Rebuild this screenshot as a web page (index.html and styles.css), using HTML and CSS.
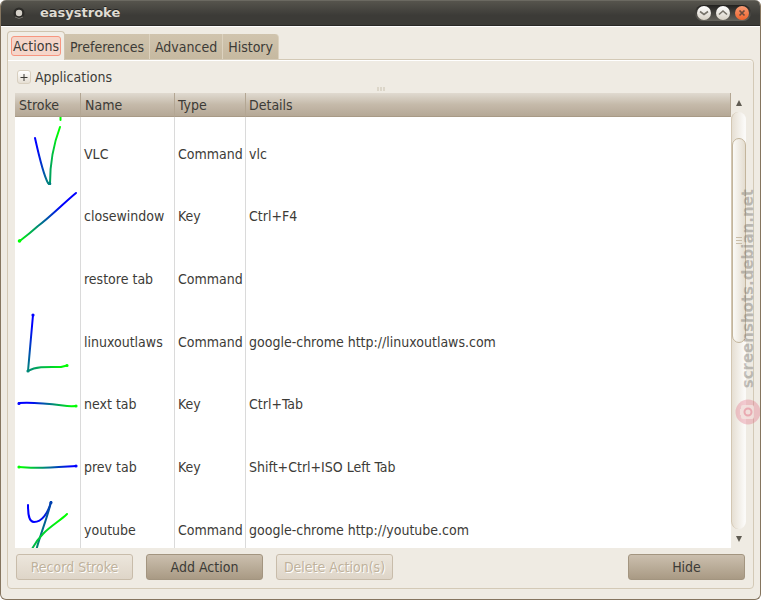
FILE: index.html
```
<!DOCTYPE html>
<html lang="en">
<head>
  <meta charset="UTF-8">
  <meta name="viewport" content="width=device-width, initial-scale=1.0">
  <title>easystroke</title>
  <link rel="stylesheet" href="styles.css">
</head>
<body>
  <div class="window">
    <header class="titlebar">
      <svg class="titlebar-menu" width="12" height="12" viewBox="0 0 12 12">
        <circle cx="6" cy="6" r="5.5" fill="#2c2b28"/>
        <path d="M2 10Q6 13 10 10" fill="none" stroke="#77756e"/>
        <circle cx="6" cy="6" r="3.2" fill="#d5d1c9"/>
      </svg>
      <h1 class="titlebar-title">easystroke</h1>
      <div class="titlebar-buttons">
        <button class="win-btn" type="button" aria-label="Minimize">
          <svg width="14" height="14" viewBox="0 0 14 14"><path d="M3 5.500L7 8.500L11 5.500" fill="none" stroke="#77736a" stroke-width="1.6"/></svg>
        </button>
        <button class="win-btn" type="button" aria-label="Maximize">
          <svg width="14" height="14" viewBox="0 0 14 14"><path d="M3 8.500L7 5L11 8.500" fill="none" stroke="#77736a" stroke-width="1.6"/></svg>
        </button>
        <button class="win-btn win-btn-close" type="button" aria-label="Close">
          <svg width="14" height="14" viewBox="0 0 14 14"><path d="M4.500 4.500L9.500 9.500M9.500 4.500L4.500 9.500" fill="none" stroke="#6b4a3c" stroke-width="1.7"/></svg>
        </button>
      </div>
    </header>

    <main class="content">
      <div class="tabs" role="tablist">
        <button class="tab tab-active" type="button" role="tab" aria-selected="true"><span class="tab-focus">Actions</span></button>
        <button class="tab" type="button" role="tab" aria-selected="false">Preferences</button>
        <button class="tab" type="button" role="tab" aria-selected="false">Advanced</button>
        <button class="tab" type="button" role="tab" aria-selected="false">History</button>
      </div>

      <section class="panel" role="tabpanel">
        <div class="expander">
          <button class="expander-btn" type="button" id="expander" aria-labelledby="expander-label">
            <svg width="8" height="8" viewBox="0 0 8 8"><path d="M4 1V8M0.500 4.500H7.500" stroke="#3c3b37" stroke-width="1"/></svg>
          </button>
          <label id="expander-label" for="expander">Applications</label>
        </div>
        <div class="grip"><i></i><i></i><i></i></div>

        <div class="list">
          <div class="list-view">
            <table class="actions">
              <thead>
                <tr>
                  <th class="col-stroke" scope="col">Stroke</th>
                  <th class="col-name" scope="col">Name</th>
                  <th class="col-type" scope="col">Type</th>
                  <th scope="col">Details</th>
                </tr>
              </thead>
              <tbody>
                <!-- tail of the row scrolled out above -->
                <tr class="row-cut">
                  <td><svg class="stroke" width="65" height="5" viewBox="0 0 65 5"><path d="M45.500 -4V3" stroke="#00ff00"/></svg></td>
                  <td></td>
                  <td></td>
                  <td></td>
                </tr>
                <tr>
                  <td>
                    <svg class="stroke" width="65" height="62" viewBox="0 0 65 62">
                      <linearGradient id="g-vlc" gradientUnits="userSpaceOnUse" x1="22" y1="0" x2="43" y2="0"><stop offset="0" stop-color="#0000ff"/><stop offset="1" stop-color="#00ff00"/></linearGradient>
                      <path d="M20 15C24 33 28 51 33 60L35 60.500C35 42 39 20 45 4" stroke="url(#g-vlc)"/>
                      <circle cx="34.5" cy="60.5" r="0.800" stroke="#007f80"/>
                    </svg>
                  </td>
                  <td>VLC</td>
                  <td>Command</td>
                  <td>vlc</td>
                </tr>
                <tr>
                  <td>
                    <svg class="stroke" width="65" height="62" viewBox="0 0 65 62">
                      <linearGradient id="g-close" gradientUnits="userSpaceOnUse" x1="61" y1="0" x2="3" y2="0"><stop offset="0" stop-color="#0000ff"/><stop offset="0.250" stop-color="#0000ff"/><stop offset="1" stop-color="#00ff00"/></linearGradient>
                      <path d="M61 8C50 17 34 33 23 41Q14 49 6 55L4 56" stroke="url(#g-close)"/>
                      <circle cx="4.500" cy="56" r="0.800" stroke="#00ff00"/>
                    </svg>
                  </td>
                  <td>closewindow</td>
                  <td>Key</td>
                  <td>Ctrl+F4</td>
                </tr>
                <tr>
                  <td></td>
                  <td>restore tab</td>
                  <td>Command</td>
                  <td></td>
                </tr>
                <tr>
                  <td>
                    <svg class="stroke" width="65" height="62" viewBox="0 0 65 62">
                      <linearGradient id="g-linux-a" gradientUnits="userSpaceOnUse" x1="0" y1="15" x2="0" y2="60"><stop offset="0" stop-color="#0000ff"/><stop offset="1" stop-color="#008878"/></linearGradient>
                      <linearGradient id="g-linux-b" gradientUnits="userSpaceOnUse" x1="13" y1="0" x2="50" y2="0"><stop offset="0" stop-color="#008878"/><stop offset="1" stop-color="#00ff00"/></linearGradient>
                      <path d="M18 4L13 60" stroke="url(#g-linux-a)"/>
                      <path d="M13 60C22 55 34 56 46 56L52 54.500" stroke="url(#g-linux-b)"/>
                      <circle cx="18" cy="4" r="0.600" stroke="#0000ff"/>
                      <circle cx="13" cy="60" r="0.600" stroke="#008878"/>
                      <circle cx="52" cy="54.500" r="0.600" stroke="#00ff00"/>
                    </svg>
                  </td>
                  <td>linuxoutlaws</td>
                  <td>Command</td>
                  <td>google-chrome http://linuxoutlaws.com</td>
                </tr>
                <tr>
                  <td>
                    <svg class="stroke" width="65" height="62" viewBox="0 0 65 62">
                      <linearGradient id="g-next" gradientUnits="userSpaceOnUse" x1="15" y1="0" x2="58" y2="0"><stop offset="0" stop-color="#0000ff"/><stop offset="1" stop-color="#00ff00"/></linearGradient>
                      <path d="M4 30C20 29 36 31 48 32.500Q54 33.500 61 33" stroke="url(#g-next)"/>
                      <circle cx="4" cy="30.500" r="0.600" stroke="#0000ff"/>
                      <circle cx="61" cy="33" r="0.600" stroke="#00ff00"/>
                    </svg>
                  </td>
                  <td>next tab</td>
                  <td>Key</td>
                  <td>Ctrl+Tab</td>
                </tr>
                <tr>
                  <td>
                    <svg class="stroke" width="65" height="62" viewBox="0 0 65 62">
                      <linearGradient id="g-prev" gradientUnits="userSpaceOnUse" x1="56" y1="0" x2="6" y2="0"><stop offset="0" stop-color="#0000ff"/><stop offset="1" stop-color="#00ff00"/></linearGradient>
                      <path d="M61 30C44 31 22 33 4 31" stroke="url(#g-prev)"/>
                      <circle cx="4" cy="31" r="0.600" stroke="#00ff00"/>
                      <circle cx="61" cy="30" r="0.600" stroke="#0000ff"/>
                    </svg>
                  </td>
                  <td>prev tab</td>
                  <td>Key</td>
                  <td>Shift+Ctrl+ISO Left Tab</td>
                </tr>
                <tr>
                  <td>
                    <svg class="stroke" width="65" height="62" viewBox="0 0 65 62">
                      <linearGradient id="g-you-a" gradientUnits="userSpaceOnUse" x1="24" y1="0" x2="36" y2="0"><stop offset="0" stop-color="#0000ff"/><stop offset="1" stop-color="#0040b0"/></linearGradient>
                      <linearGradient id="g-you-b" gradientUnits="userSpaceOnUse" x1="0" y1="4" x2="0" y2="52"><stop offset="0" stop-color="#0040b0"/><stop offset="1" stop-color="#009068"/></linearGradient>
                      <linearGradient id="g-you-c" gradientUnits="userSpaceOnUse" x1="18" y1="0" x2="46" y2="0"><stop offset="0" stop-color="#00b848"/><stop offset="1" stop-color="#00ff00"/></linearGradient>
                      <path d="M13 6C13 16 14 23 19 23C27 23 33 14 36 3" stroke="url(#g-you-a)"/>
                      <path d="M36 3C32 20 25 36 21 52" stroke="url(#g-you-b)"/>
                      <path d="M16 52C26 31 42 25 52 15" stroke="url(#g-you-c)"/>
                      <circle cx="36" cy="3.500" r="0.600" stroke="#0040b0"/>
                    </svg>
                  </td>
                  <td>youtube</td>
                  <td>Command</td>
                  <td>google-chrome http://youtube.com</td>
                </tr>
              </tbody>
            </table>
          </div>
          <div class="scrollbar">
            <button class="scroll-btn" type="button" aria-label="Scroll up"><svg width="6" height="6" viewBox="0 0 6 6"><path d="M3 0L6 6H0Z" fill="#5f5b52"/></svg></button>
            <div class="scroll-track">
              <div class="scroll-thumb"><i></i><i></i><i></i></div>
            </div>
            <button class="scroll-btn" type="button" aria-label="Scroll down"><svg width="6" height="6" viewBox="0 0 6 6"><path d="M0 0H6L3 6Z" fill="#5f5b52"/></svg></button>
          </div>
        </div>

        <div class="actions-bar">
          <button class="btn" type="button" disabled>Record Stroke</button>
          <button class="btn" type="button">Add Action</button>
          <button class="btn" type="button" disabled>Delete Action(s)</button>
          <button class="btn btn-end" type="button">Hide</button>
        </div>
      </section>
    </main>

    <div class="watermark">
      <span class="watermark-text">screenshots.debian.net</span>
      <svg width="26" height="26" viewBox="0 0 26 26">
        <circle cx="13" cy="13" r="12.500" fill="#e0637c" fill-opacity="0.320"/>
        <path d="M8 6H17Q19 6 19 8V18Q19 20 17 20H8Q6 20 6 18V16H5V10H6V8Q6 6 8 6Z" fill="#f3e6e1" fill-opacity="0.800"/>
        <circle cx="13" cy="13" r="3.500" fill="none" stroke="#e9a9b1" stroke-width="2"/>
      </svg>
    </div>
  </div>
</body>
</html>
```
FILE: styles.css
```
html, body {
  margin: 0;
  padding: 0;
  height: 100%;
}
body {
  background: #fff;
  color: #3c3b37;
  font-family: "DejaVu Sans Condensed", "DejaVu Sans", sans-serif;
  font-size: 14px;
  line-height: 16px;
}
* {
  box-sizing: border-box;
}
button {
  margin: 0;
  padding: 0;
  border: 0;
  background: none;
  color: inherit;
  font: inherit;
}
svg {
  display: block;
}
.window {
  position: relative;
  display: flex;
  flex-direction: column;
  height: 100%;
  overflow: hidden;
  border: 1px solid #85755f;
  border-top: 0;
  border-radius: 6px;
  background: #efebe3;
}

/* title bar */
.titlebar {
  display: flex;
  align-items: center;
  flex: none;
  height: 26px;
  padding: 0 9px 0 12px;
  border-top: 1px solid #6b6961;
  border-bottom: 1px solid #2a2926;
  background: linear-gradient(to bottom, #56544d, #3c3b37 60%);
}
.titlebar-title {
  flex: 1;
  margin: 0 0 0 15px;
  color: #dfdbd2;
  font-family: "DejaVu Sans", sans-serif;
  font-size: 13px;
  font-weight: bold;
  text-shadow: 0 -1px #22211f;
}
.titlebar-buttons {
  display: flex;
  align-items: center;
  gap: 5px;
  padding: 1px 2px;
  border-radius: 10px;
  background: linear-gradient(to bottom, #22211f, #66645d);
}
.win-btn {
  width: 14px;
  height: 14px;
  border-radius: 50%;
  background: linear-gradient(to bottom, #fff, #d6d0c4);
}
.win-btn-close {
  background: linear-gradient(to bottom, #f79b75, #f0642c);
}

/* notebook */
.content {
  display: flex;
  flex-direction: column;
  flex: 1;
  min-height: 0;
  padding: 5px 6px 10px;
  border-top: 1px solid #fff;
}
.tabs {
  display: flex;
  align-items: flex-end;
  flex: none;
  height: 27px;
}
.tab {
  height: 25px;
  padding: 0 5px;
  border-right: 1px solid #dcd2bf;
  background: linear-gradient(to bottom, #d0c4ae, #c6b9a0);
}
.tab:last-child {
  border-radius: 0 4px 0 0;
}
.tab-active {
  z-index: 1;
  height: 29px;
  margin-bottom: -1px;
  padding: 0 3px;
  border: 1px solid #cfc4b0;
  border-bottom: 0;
  border-radius: 4px 4px 0 0;
  background: #f1ede6;
}
.tab-focus {
  display: block;
  margin-bottom: 1px;
  padding: 1px;
  border: 1px solid #f79680;
  border-radius: 3px;
  background: #f5d6ca;
}
.panel {
  display: flex;
  flex-direction: column;
  flex: 1;
  min-height: 0;
  padding: 9px 7px 8px;
  border: 1px solid #d3c9b6;
  border-radius: 0 4px 4px 4px;
  box-shadow: inset 0 1px #fff;
}
.expander {
  display: flex;
  align-items: center;
  gap: 4px;
  padding-left: 2px;
}
.expander-btn {
  display: flex;
  align-items: center;
  justify-content: center;
  width: 14px;
  height: 14px;
  border: 1px solid #d8cfbf;
  border-radius: 3px;
  background: linear-gradient(to bottom, #fff, #e6dfd3);
}
.grip {
  display: flex;
  justify-content: center;
  align-items: center;
  gap: 1px;
  height: 8px;
}
.grip i {
  width: 2px;
  height: 4px;
  background: #dcd6c9;
}

/* actions list */
.list {
  display: flex;
  flex: 1;
  min-height: 0;
}
.list-view {
  flex: 1;
  overflow: hidden;
  background: #fff;
}
.actions {
  width: 100%;
  border-collapse: separate;
  border-spacing: 0;
  table-layout: fixed;
}
.actions th {
  height: 24px;
  padding: 0 4px;
  border-right: 1px solid #b3a693;
  border-bottom: 1px solid #a89a86;
  background: linear-gradient(to bottom, #e0dad0, #c5baaa 50%, #b5a896);
  font-weight: normal;
  text-align: left;
}
.actions td {
  height: 63px;
  padding: 0 0 0 3px;
  border-right: 1px solid #dadada;
  white-space: nowrap;
}
.actions tr:nth-child(3n) td {
  height: 62px;
}
.actions td:first-child {
  padding: 0;
}
.actions td:last-child {
  border-right: 0;
}
.actions .row-cut td {
  height: 5px;
}
.actions .col-stroke {
  width: 66px;
}
.actions .col-name {
  width: 94px;
}
.actions .col-type {
  width: 71px;
  padding: 0 3px;
}
.actions .col-type + th {
  padding: 0 3px;
}
.stroke {
  fill: none;
  stroke-width: 2;
  stroke-linecap: round;
  stroke-linejoin: round;
}

/* scrollbar */
.scrollbar {
  display: flex;
  flex-direction: column;
  width: 15px;
}
.scroll-btn {
  display: flex;
  align-items: center;
  justify-content: center;
  height: 19px;
}
.scroll-track {
  display: grid;
  grid-template-rows: 26fr 205fr 186fr;
  flex: 1;
  border-left: 1px solid #d3c7b3;
  border-radius: 8px;
  background: linear-gradient(to right, #e6dfd3, #fbfaf8 90%);
}
.scroll-thumb {
  display: flex;
  flex-direction: column;
  align-items: center;
  justify-content: center;
  gap: 2px;
  grid-row: 2;
  border: 1px solid #c3b59c;
  border-radius: 7px;
  background: linear-gradient(to right, #fbfaf7, #e4ddd0);
}
.scroll-thumb i {
  width: 6px;
  height: 1px;
  background: #c9bda8;
}

/* bottom buttons */
.actions-bar {
  display: flex;
  gap: 13px;
  padding: 6px 1px 0;
}
.btn {
  width: 117px;
  height: 26px;
  border: 1px solid #a39580;
  border-radius: 3px;
  background: linear-gradient(to bottom, #cbbfae, #a99a84);
}
.btn:disabled {
  border-color: #c8bcaa;
  background: linear-gradient(to bottom, #ece6dc, #ded5c8);
  color: #bfb29c;
  text-shadow: 1px 1px #fff;
}
.btn-end {
  margin-left: auto;
}

/* label laid over the right edge of the window */
.watermark {
  position: absolute;
  top: 189px;
  right: -1px;
  display: flex;
  flex-direction: column;
  align-items: center;
  gap: 11px;
}
.watermark-text {
  color: rgba(120, 118, 112, 0.45);
  font-family: "DejaVu Sans", sans-serif;
  font-size: 15px;
  font-weight: bold;
  writing-mode: vertical-rl;
  transform: rotate(180deg);
}
```
